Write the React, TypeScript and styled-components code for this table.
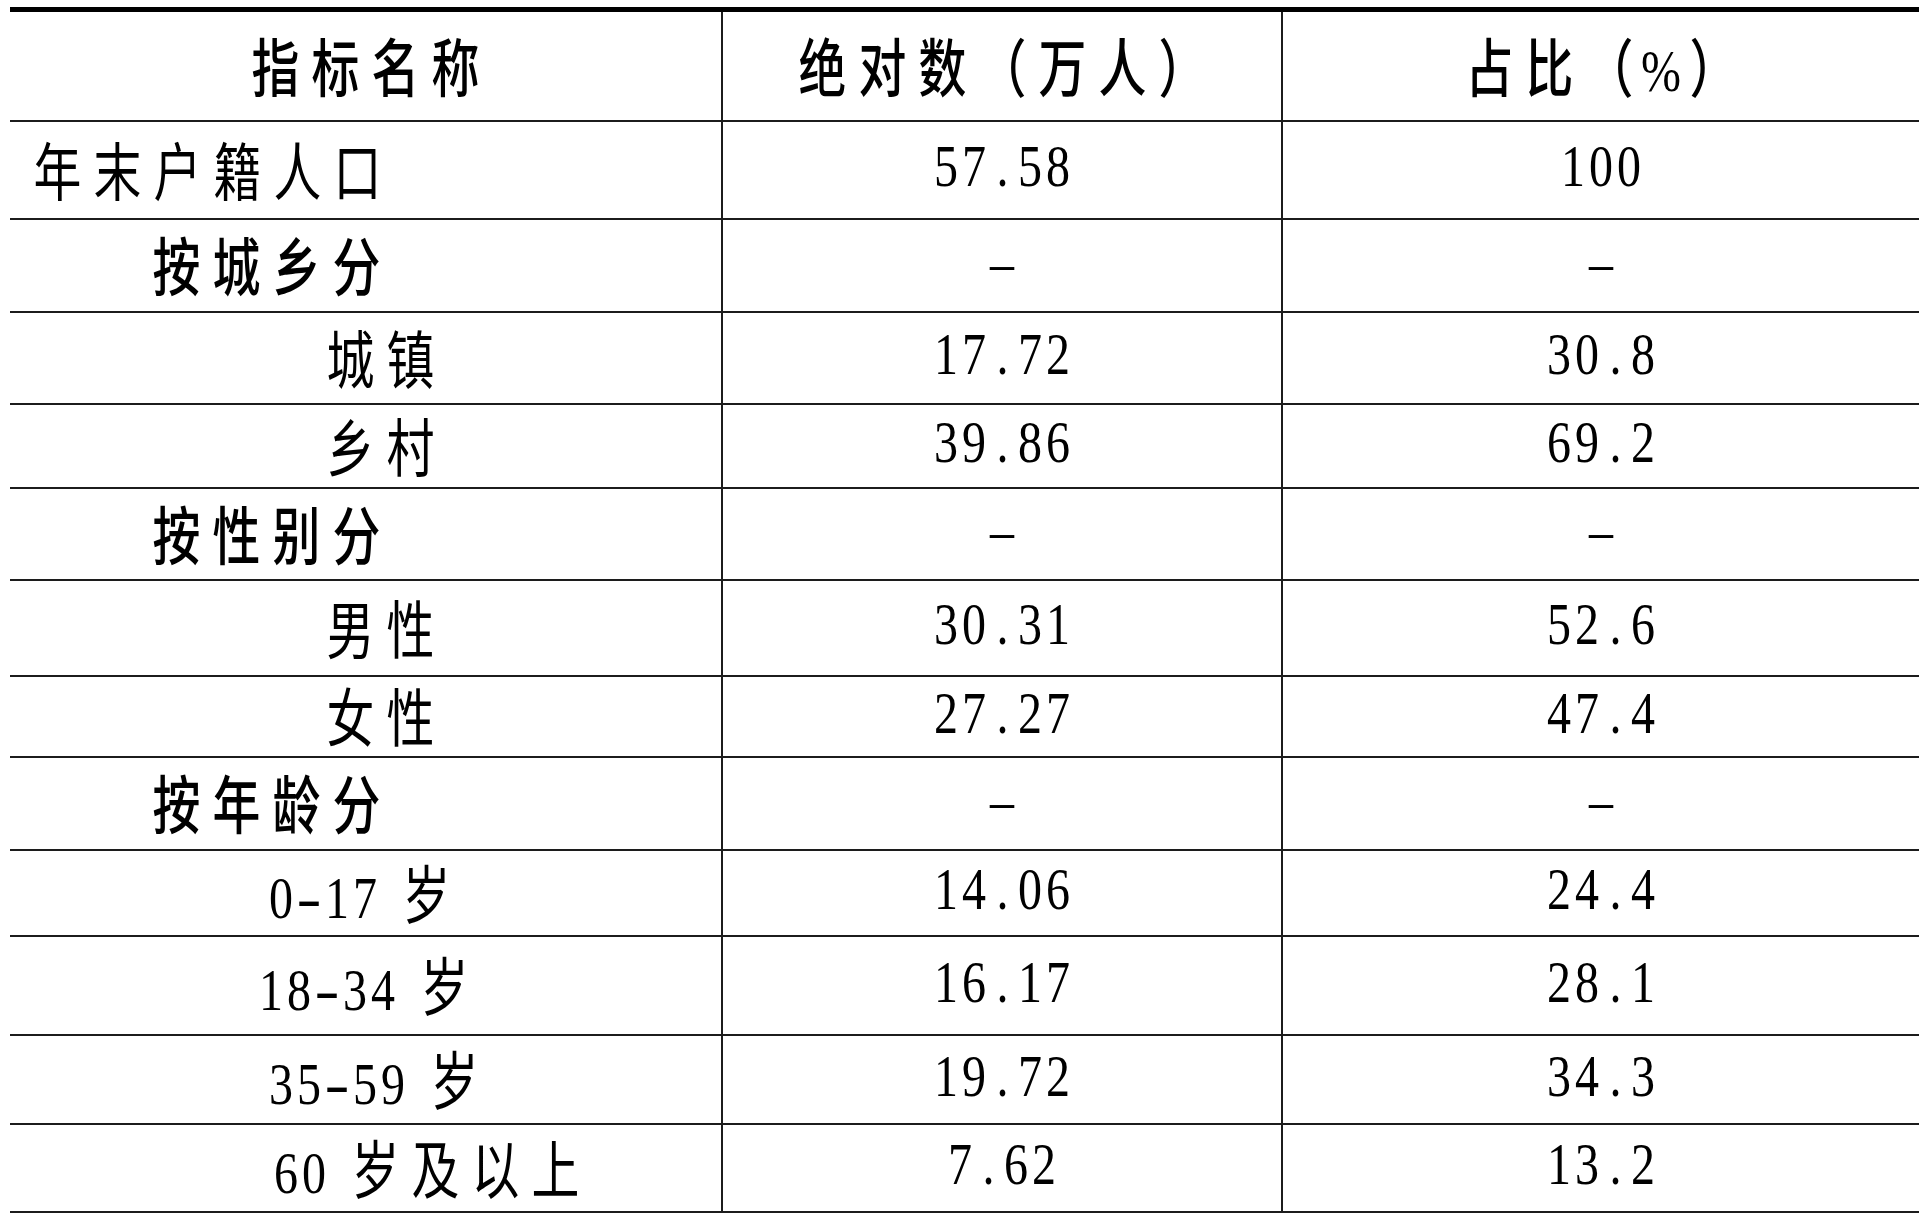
import React from "react";
import styled, { createGlobalStyle } from "styled-components";

const GlobalStyle = createGlobalStyle`
  html, body {
    margin: 0;
    padding: 0;
    background: #ffffff;
  }
  body {
    overflow: hidden;
    color: #000000;
    font-family: "Liberation Serif", "Noto Sans CJK SC", serif;
  }
`;

const Page = styled.div`
  padding: 7px 0 0 10px;
`;

const Table = styled.div`
  width: 1909px;
  border-top: 5px solid #000000;
`;

const Row = styled.div<{ $h: number }>`
  display: grid;
  grid-template-columns: 713px 560px 1fr;
  height: ${(p) => p.$h}px;
  box-sizing: border-box;
  border-bottom: 2px solid #1c1c1c;
`;

const Cell = styled.div<{ $indent?: number; $lift?: number }>`
  display: flex;
  align-items: center;
  justify-content: ${(p) => (p.$indent === undefined ? "center" : "flex-start")};
  padding-left: ${(p) => p.$indent ?? 0}px;
  padding-bottom: ${(p) => p.$lift ?? 0}px;
  box-sizing: border-box;
  border-right: 2px solid #1c1c1c;
  white-space: nowrap;

  &:last-child {
    border-right: none;
  }
`;

const Line = styled.span`
  display: block;
  font-size: 58px;
  line-height: 1;
`;

type Kind = "han" | "latin" | "dash" | "space" | "wide";

const SLOT: Record<Kind, number> = { han: 60, latin: 28, dash: 28, space: 17, wide: 44 };
const SCALE: Record<Kind, number> = { han: 0.76, latin: 0.8, dash: 1.25, space: 1, wide: 0.8 };

const Slot = styled.span<{ $w: number }>`
  display: inline-flex;
  justify-content: center;
  width: ${(p) => p.$w}px;
`;

const Face = styled.span<{ $kind: Kind; $bold?: boolean }>`
  display: inline-block;
  line-height: 1;
  font-family: ${(p) =>
    p.$kind === "han" ? `"Noto Sans CJK SC", sans-serif` : `"Liberation Serif", serif`};
  font-size: ${(p) => (p.$kind === "han" ? 63 : 60)}px;
  font-weight: ${(p) => (p.$bold && p.$kind === "han" ? 500 : 400)};
  transform: scaleX(${(p) => SCALE[p.$kind]});
`;

const kindOf = (ch: string): Kind => {
  if (ch === " ") return "space";
  if (ch === "%") return "wide";
  if (ch === "-") return "dash";
  return ch.charCodeAt(0) > 0x2e80 ? "han" : "latin";
};

// 每个字占一个固定宽度的格子，模拟原表的等宽排版
const Text = ({ children, bold }: { children: string; bold?: boolean }) => (
  <Line>
    {Array.from(children).map((ch, i) => {
      const kind = kindOf(ch);
      return (
        <Slot key={i} $w={SLOT[kind]}>
          <Face $kind={kind} $bold={bold}>
            {ch}
          </Face>
        </Slot>
      );
    })}
  </Line>
);

type Item = {
  name: string;
  indent: number;
  value: string;
  share: string;
  h: number;
  group?: boolean;
};

const items: Item[] = [
  { name: "年末户籍人口", indent: 17, value: "57.58", share: "100", h: 98 },
  { name: "按城乡分", indent: 136, value: "–", share: "–", h: 93, group: true },
  { name: "城镇", indent: 310, value: "17.72", share: "30.8", h: 92 },
  { name: "乡村", indent: 310, value: "39.86", share: "69.2", h: 84 },
  { name: "按性别分", indent: 136, value: "–", share: "–", h: 92, group: true },
  { name: "男性", indent: 310, value: "30.31", share: "52.6", h: 96 },
  { name: "女性", indent: 310, value: "27.27", share: "47.4", h: 81 },
  { name: "按年龄分", indent: 136, value: "–", share: "–", h: 93, group: true },
  { name: "0-17 岁", indent: 257, value: "14.06", share: "24.4", h: 86 },
  { name: "18-34 岁", indent: 247, value: "16.17", share: "28.1", h: 99 },
  { name: "35-59 岁", indent: 257, value: "19.72", share: "34.3", h: 89 },
  { name: "60 岁及以上", indent: 262, value: "7.62", share: "13.2", h: 88 },
];

const App = () => (
  <>
    <GlobalStyle />
    <Page>
      <Table>
        <Row $h={110}>
          <Cell>
            <Text bold>指标名称</Text>
          </Cell>
          <Cell>
            <Text bold>绝对数（万人）</Text>
          </Cell>
          <Cell>
            <Text bold>占比（%）</Text>
          </Cell>
        </Row>
        {items.map((item) => (
          <Row key={item.name} $h={item.h}>
            <Cell $indent={item.indent}>
              <Text bold={item.group}>{item.name}</Text>
            </Cell>
            <Cell $lift={8}>
              <Text>{item.value}</Text>
            </Cell>
            <Cell $lift={8}>
              <Text>{item.share}</Text>
            </Cell>
          </Row>
        ))}
      </Table>
    </Page>
  </>
);

export default App;
